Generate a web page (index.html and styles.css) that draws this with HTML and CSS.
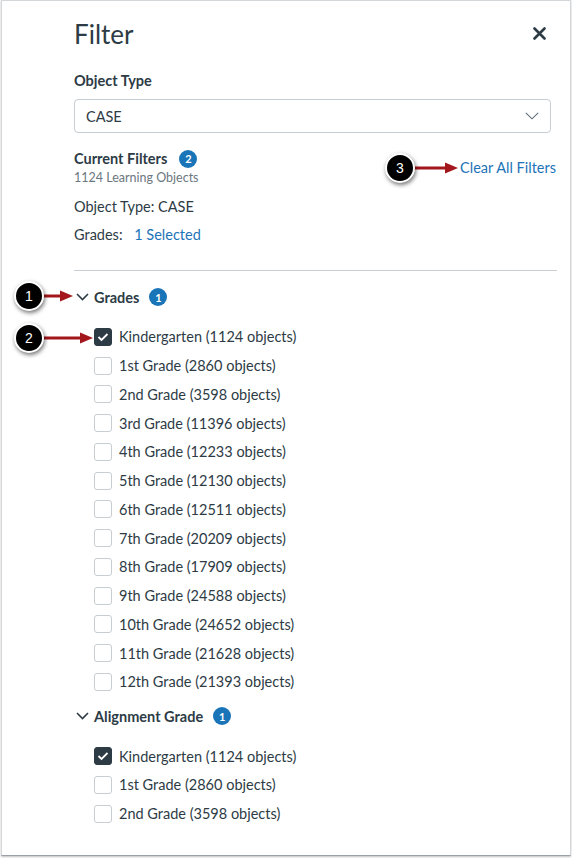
FILE: index.html
```html
<!DOCTYPE html>
<html lang="en">
<head>
<meta charset="utf-8">
<title>Filter</title>
<link rel="stylesheet" href="styles.css">
</head>
<body>
<div class="stage">
  <div class="panel">
    <header class="head">
      <h1 class="title">Filter</h1>
      <span class="close" aria-label="Close">
        <svg width="13" height="13" viewBox="0 0 13 13"><path d="M1.5 1.5 L11.5 11.5 M11.5 1.5 L1.5 11.5" stroke="#2d3b45" stroke-width="2.6" stroke-linecap="round"/></svg>
      </span>
    </header>

    <div class="label">Object Type</div>
    <div class="select">
      <span>CASE</span>
      <svg width="14" height="8" viewBox="0 0 14 8"><path d="M0.8 0.8 L7 6.8 L13.2 0.8" fill="none" stroke="#5f6b74" stroke-width="1.1"/></svg>
    </div>

    <div class="current">
      <div>
        <div class="cf-title">Current Filters <span class="badge">2</span></div>
        <div class="cf-sub">1124 Learning Objects</div>
      </div>
      <span class="link clear">Clear All Filters</span>
    </div>
    <div class="summary first">Object Type: CASE</div>
    <div class="summary">Grades: <span class="link sel">1 Selected</span></div>

    <div class="divider"></div>

    <section class="group">
      <div class="group-head">
        <span class="chev"><svg width="13" height="8" viewBox="0 0 13 8"><path d="M1 1 L6.5 6.5 L12 1" fill="none" stroke="#2d3b45" stroke-width="1.6"/></svg></span>
        <span class="group-title">Grades</span>
        <span class="badge">1</span>
      </div>
      <ul class="options">
        <li><span class="box checked"><svg width="12" height="10" viewBox="0 0 12 10"><path d="M1.5 5 L4.5 8 L10.5 2" fill="none" stroke="#fff" stroke-width="1.8"/></svg></span>Kindergarten (1124 objects)</li>
        <li><span class="box"></span>1st Grade (2860 objects)</li>
        <li><span class="box"></span>2nd Grade (3598 objects)</li>
        <li><span class="box"></span>3rd Grade (11396 objects)</li>
        <li><span class="box"></span>4th Grade (12233 objects)</li>
        <li><span class="box"></span>5th Grade (12130 objects)</li>
        <li><span class="box"></span>6th Grade (12511 objects)</li>
        <li><span class="box"></span>7th Grade (20209 objects)</li>
        <li><span class="box"></span>8th Grade (17909 objects)</li>
        <li><span class="box"></span>9th Grade (24588 objects)</li>
        <li><span class="box"></span>10th Grade (24652 objects)</li>
        <li><span class="box"></span>11th Grade (21628 objects)</li>
        <li><span class="box"></span>12th Grade (21393 objects)</li>
      </ul>
    </section>

    <section class="group">
      <div class="group-head">
        <span class="chev"><svg width="13" height="8" viewBox="0 0 13 8"><path d="M1 1 L6.5 6.5 L12 1" fill="none" stroke="#2d3b45" stroke-width="1.6"/></svg></span>
        <span class="group-title">Alignment Grade</span>
        <span class="badge">1</span>
      </div>
      <ul class="options">
        <li><span class="box checked"><svg width="12" height="10" viewBox="0 0 12 10"><path d="M1.5 5 L4.5 8 L10.5 2" fill="none" stroke="#fff" stroke-width="1.8"/></svg></span>Kindergarten (1124 objects)</li>
        <li><span class="box"></span>1st Grade (2860 objects)</li>
        <li><span class="box"></span>2nd Grade (3598 objects)</li>
      </ul>
    </section>
  </div>

  <svg class="arrows" width="572" height="858" viewBox="0 0 572 858">
    <g fill="#a3161b" stroke="#a3161b">
      <line x1="42" y1="296" x2="62" y2="296" stroke-width="3"/>
      <polygon points="60,290.5 73,296 60,301.5" stroke="none"/>
      <line x1="42" y1="338" x2="82" y2="338" stroke-width="3"/>
      <polygon points="80,332.5 93,338 80,343.5" stroke="none"/>
      <line x1="413" y1="168" x2="447" y2="168" stroke-width="3"/>
      <polygon points="445,162.5 458,168 445,173.5" stroke="none"/>
    </g>
  </svg>
  <div class="callout c1">1</div>
  <div class="callout c2">2</div>
  <div class="callout c3">3</div>
</div>
</body>
</html>
```

FILE: styles.css
```css
html, body {
  margin: 0;
  padding: 0;
  background: #fff;
}

body {
  font-family: Lato, "Open Sans", "Liberation Sans", sans-serif;
  color: #2d3b45;
}

.stage {
  position: relative;
  width: 572px;
  height: 858px;
  overflow: hidden;
}

.panel {
  box-sizing: border-box;
  margin-left: 1px;
  width: 570px;
  height: 856px;
  border: 1px solid #d3d7da;
  border-bottom-color: #9aa0a5;
  box-shadow: 0 1px 2px rgba(0, 0, 0, 0.25);
  padding: 17px 13px 0 72px;
  background: #fff;
}

.head {
  display: flex;
  align-items: center;
  justify-content: space-between;
  height: 32px;
}

.title {
  margin: 0;
  font-size: 26px;
  font-weight: 400;
  line-height: 32px;
  color: #2d3b45;
}

.close {
  display: flex;
  margin-right: 11px;
  margin-top: -2px;
}

.label {
  margin-top: 21px;
  font-size: 14.5px;
  font-weight: 700;
  line-height: 20px;
}

.select {
  box-sizing: border-box;
  margin-top: 8px;
  width: 477px;
  height: 34px;
  border: 1px solid #c7cdd1;
  border-radius: 4px;
  display: flex;
  align-items: center;
  justify-content: space-between;
  padding: 0 11px 0 11px;
  font-size: 14.5px;
}

.current {
  margin-top: 16px;
  display: flex;
  justify-content: space-between;
  align-items: flex-start;
}

.cf-title {
  font-size: 14.5px;
  font-weight: 700;
  line-height: 20px;
  display: flex;
  align-items: center;
}

.cf-title .badge {
  margin-left: 12px;
}

.cf-sub {
  font-size: 12.5px;
  line-height: 16px;
  color: #6b7780;
  margin-top: 1px;
}

.link {
  color: #1d74b8;
}

.clear {
  font-size: 14.5px;
  line-height: 20px;
  margin-top: 9px;
  margin-right: 1px;
}

.summary {
  font-size: 14.5px;
  line-height: 28px;
}

.summary.first {
  margin-top: 7px;
}

.sel {
  margin-left: 8px;
}

.divider {
  margin-top: 21px;
  height: 1px;
  background: #c7cdd1;
}

.group-head {
  display: flex;
  align-items: center;
  height: 24px;
  margin-top: 14px;
}

.group + .group .group-head {
  margin-top: 8px;
}

.chev {
  width: 20px;
  display: flex;
  padding-left: 2px;
  box-sizing: border-box;
}

.group-title {
  font-size: 14.5px;
  font-weight: 700;
}

.group-head .badge {
  margin-left: 10px;
}

.badge {
  display: inline-flex;
  align-items: center;
  justify-content: center;
  width: 18px;
  height: 18px;
  border-radius: 50%;
  background: #1a74b8;
  color: #fff;
  font-size: 11px;
  font-weight: 700;
}

.options {
  list-style: none;
  margin: 13.5px 0 0 0;
  padding: 0 0 0 20px;
}

.options li {
  display: flex;
  align-items: center;
  height: 28.75px;
  font-size: 14.5px;
}

.box {
  box-sizing: border-box;
  width: 18px;
  height: 18px;
  border: 1px solid #c7cdd1;
  border-radius: 3px;
  margin-right: 7px;
  display: flex;
  align-items: center;
  justify-content: center;
  flex-shrink: 0;
}

.box.checked {
  background: #2d3b45;
  border-color: #2d3b45;
}

.arrows {
  position: absolute;
  left: 0;
  top: 0;
  pointer-events: none;
}

.callout {
  position: absolute;
  box-sizing: border-box;
  width: 30px;
  height: 30px;
  border-radius: 50%;
  background: #000;
  border: 2px solid #fff;
  box-shadow: 1px 2px 4px rgba(0, 0, 0, 0.55);
  color: #fff;
  font-family: "Liberation Sans", Arial, sans-serif;
  font-size: 14px;
  display: flex;
  align-items: center;
  justify-content: center;
}

.c1 { left: 14px; top: 281px; }
.c2 { left: 14px; top: 323px; }
.c3 { left: 385px; top: 153px; }
```
